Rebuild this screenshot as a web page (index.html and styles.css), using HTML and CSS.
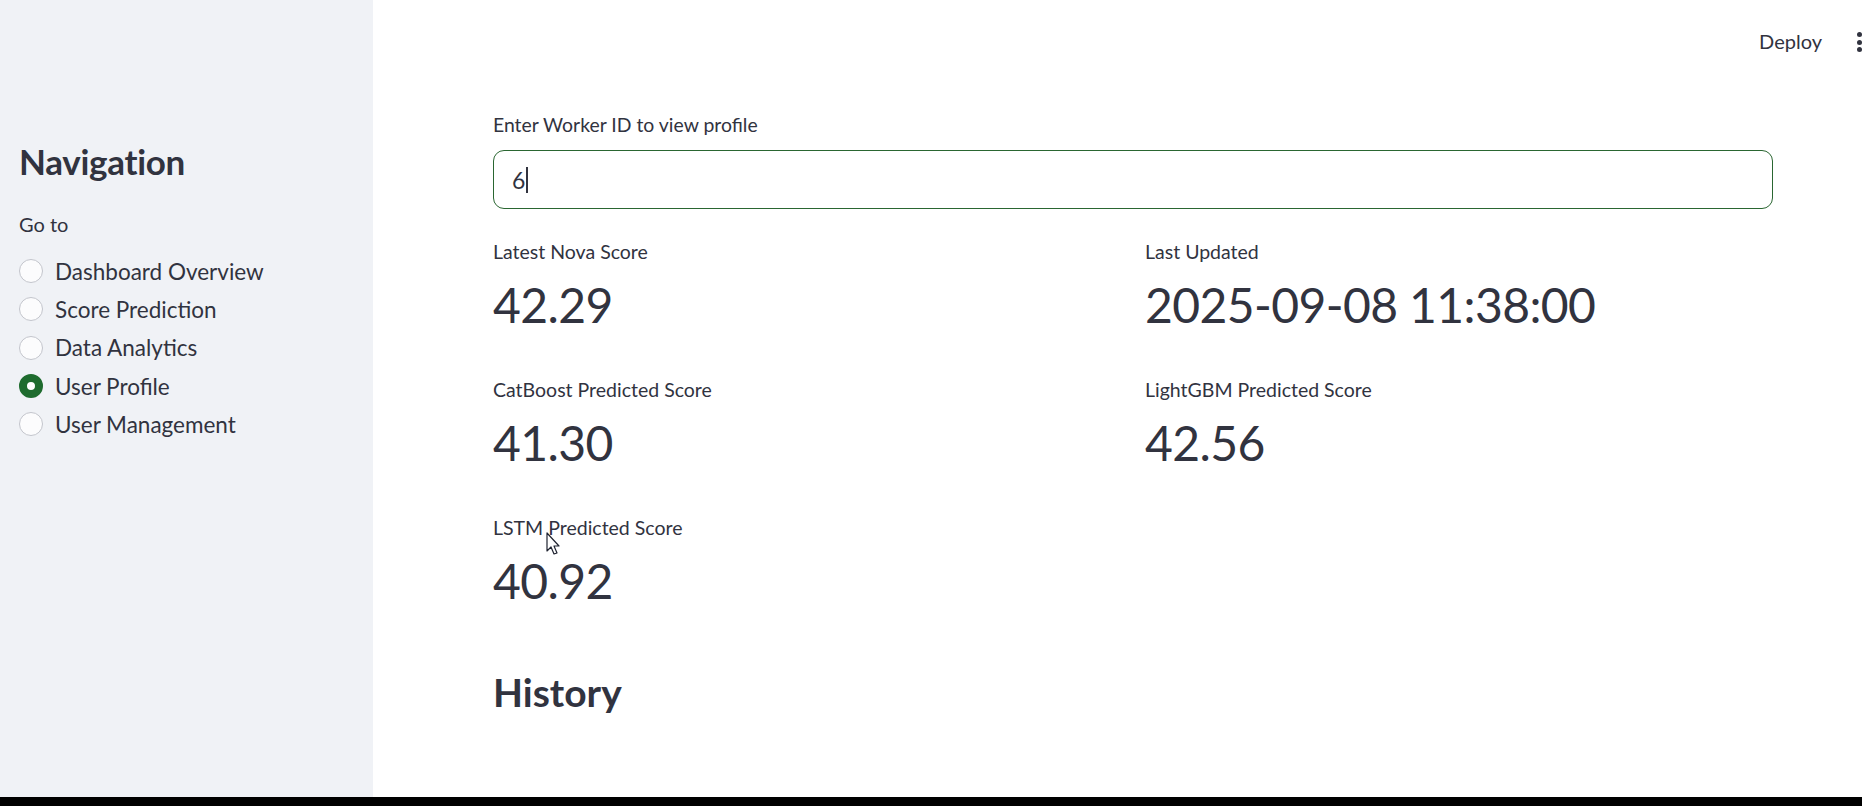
FILE: index.html
```html
<!DOCTYPE html>
<html lang="en">
<head>
<meta charset="utf-8">
<title>User Profile</title>
<link rel="stylesheet" href="styles.css">
</head>
<body>
<div class="app">
  <aside class="sidebar">
    <h1 class="nav-title">Navigation</h1>
    <div class="radio-label">Go to</div>
    <div class="radio-group">
      <div class="radio"><span class="dot"></span><span>Dashboard Overview</span></div>
      <div class="radio"><span class="dot"></span><span>Score Prediction</span></div>
      <div class="radio"><span class="dot"></span><span>Data Analytics</span></div>
      <div class="radio checked"><span class="dot"></span><span>User Profile</span></div>
      <div class="radio"><span class="dot"></span><span>User Management</span></div>
    </div>
  </aside>
  <main class="main">
    <header class="topbar">
      <span class="deploy">Deploy</span>
      <span class="menu"><i></i><i></i><i></i></span>
    </header>
    <section class="content">
      <label class="field-label">Enter Worker ID to view profile</label>
      <div class="input"><span class="input-value">6</span><span class="caret"></span></div>
      <div class="metrics">
        <div class="metric"><div class="m-label">Latest Nova Score</div><div class="m-value">42.29</div></div>
        <div class="metric"><div class="m-label">Last Updated</div><div class="m-value">2025-09-08 11:38:00</div></div>
        <div class="metric"><div class="m-label">CatBoost Predicted Score</div><div class="m-value">41.30</div></div>
        <div class="metric"><div class="m-label">LightGBM Predicted Score</div><div class="m-value">42.56</div></div>
        <div class="metric"><div class="m-label">LSTM Predicted Score</div><div class="m-value">40.92</div></div>
      </div>
      <h3 class="history">History</h3>
    </section>
  </main>
</div>
<div class="bottom-bar"></div>
<svg class="cursor" width="14" height="24" viewBox="0 0 14 24"><path d="M1 1 L1 19 L5 15 L8 22 L11 21 L8 14 L13 14 Z" fill="#fff" stroke="#1f2330" stroke-width="1.2" stroke-linejoin="round"/></svg>
</body>
</html>
```

FILE: styles.css
```css
* { box-sizing: border-box; }
html, body { margin: 0; padding: 0; }
body {
  width: 1862px;
  height: 806px;
  overflow: hidden;
  font-family: "Lato", "Noto Sans", sans-serif;
  color: #31333f;
  background: #fff;
  position: relative;
}
.app {
  display: flex;
  height: 797px;
}
.sidebar {
  width: 373px;
  flex: none;
  background: #f0f2f6;
  padding: 139px 0 0 19px;
}
.nav-title {
  margin: 0;
  font-size: 35px;
  font-weight: 700;
  line-height: 44px;
  letter-spacing: -0.3px;
}
.radio-label {
  margin-top: 28px;
  font-size: 20px;
  line-height: 26px;
}
.radio-group {
  margin-top: 15px;
  display: flex;
  flex-direction: column;
}
.radio {
  display: flex;
  align-items: center;
  height: 38.3px;
  font-size: 22.5px;
  gap: 12px;
}
.dot {
  width: 24px;
  height: 24px;
  border-radius: 50%;
  border: 1.5px solid #c3c5cc;
  background: #fcfcfd;
  flex: none;
}
.radio.checked .dot {
  border: 8px solid #1e6b2e;
  background: #fff;
}
.main {
  flex: 1;
}
.topbar {
  height: 82px;
  display: flex;
  justify-content: flex-end;
  align-items: flex-start;
}
.deploy {
  font-size: 20px;
  line-height: 26px;
  margin-top: 28px;
  margin-right: 35px;
}
.menu {
  display: flex;
  flex-direction: column;
  gap: 2.5px;
  margin-right: 0;
  margin-top: 32px;
}
.menu i {
  display: block;
  width: 5px;
  height: 5px;
  border-radius: 50%;
  background: #31333f;
}
.content {
  width: 1280px;
  margin-left: 120px;
}
.field-label {
  display: block;
  font-size: 19.4px;
  line-height: 26px;
  margin-top: 30px;
}
.input {
  margin-top: 12px;
  height: 59px;
  border: 1px solid #2a6631;
  border-radius: 11px;
  display: flex;
  align-items: center;
  padding-left: 18px;
  font-size: 23px;
}
.caret {
  width: 2px;
  height: 26px;
  background: #31333f;
  margin-left: 1px;
}
.metrics {
  display: grid;
  grid-template-columns: 1fr 1fr;
  column-gap: 24px;
  margin-top: 30px;
}
.metric {
  height: 138px;
}
.m-label {
  font-size: 19.5px;
  line-height: 26px;
}
.m-value {
  font-size: 48px;
  line-height: 58px;
  margin-top: 11px;
  letter-spacing: -0.6px;
}
.history {
  margin: 14px 0 0;
  font-size: 39px;
  font-weight: 700;
  line-height: 50px;
}
.bottom-bar {
  height: 9px;
  background: #000;
}
.cursor {
  position: absolute;
  left: 546px;
  top: 532px;
}
```
